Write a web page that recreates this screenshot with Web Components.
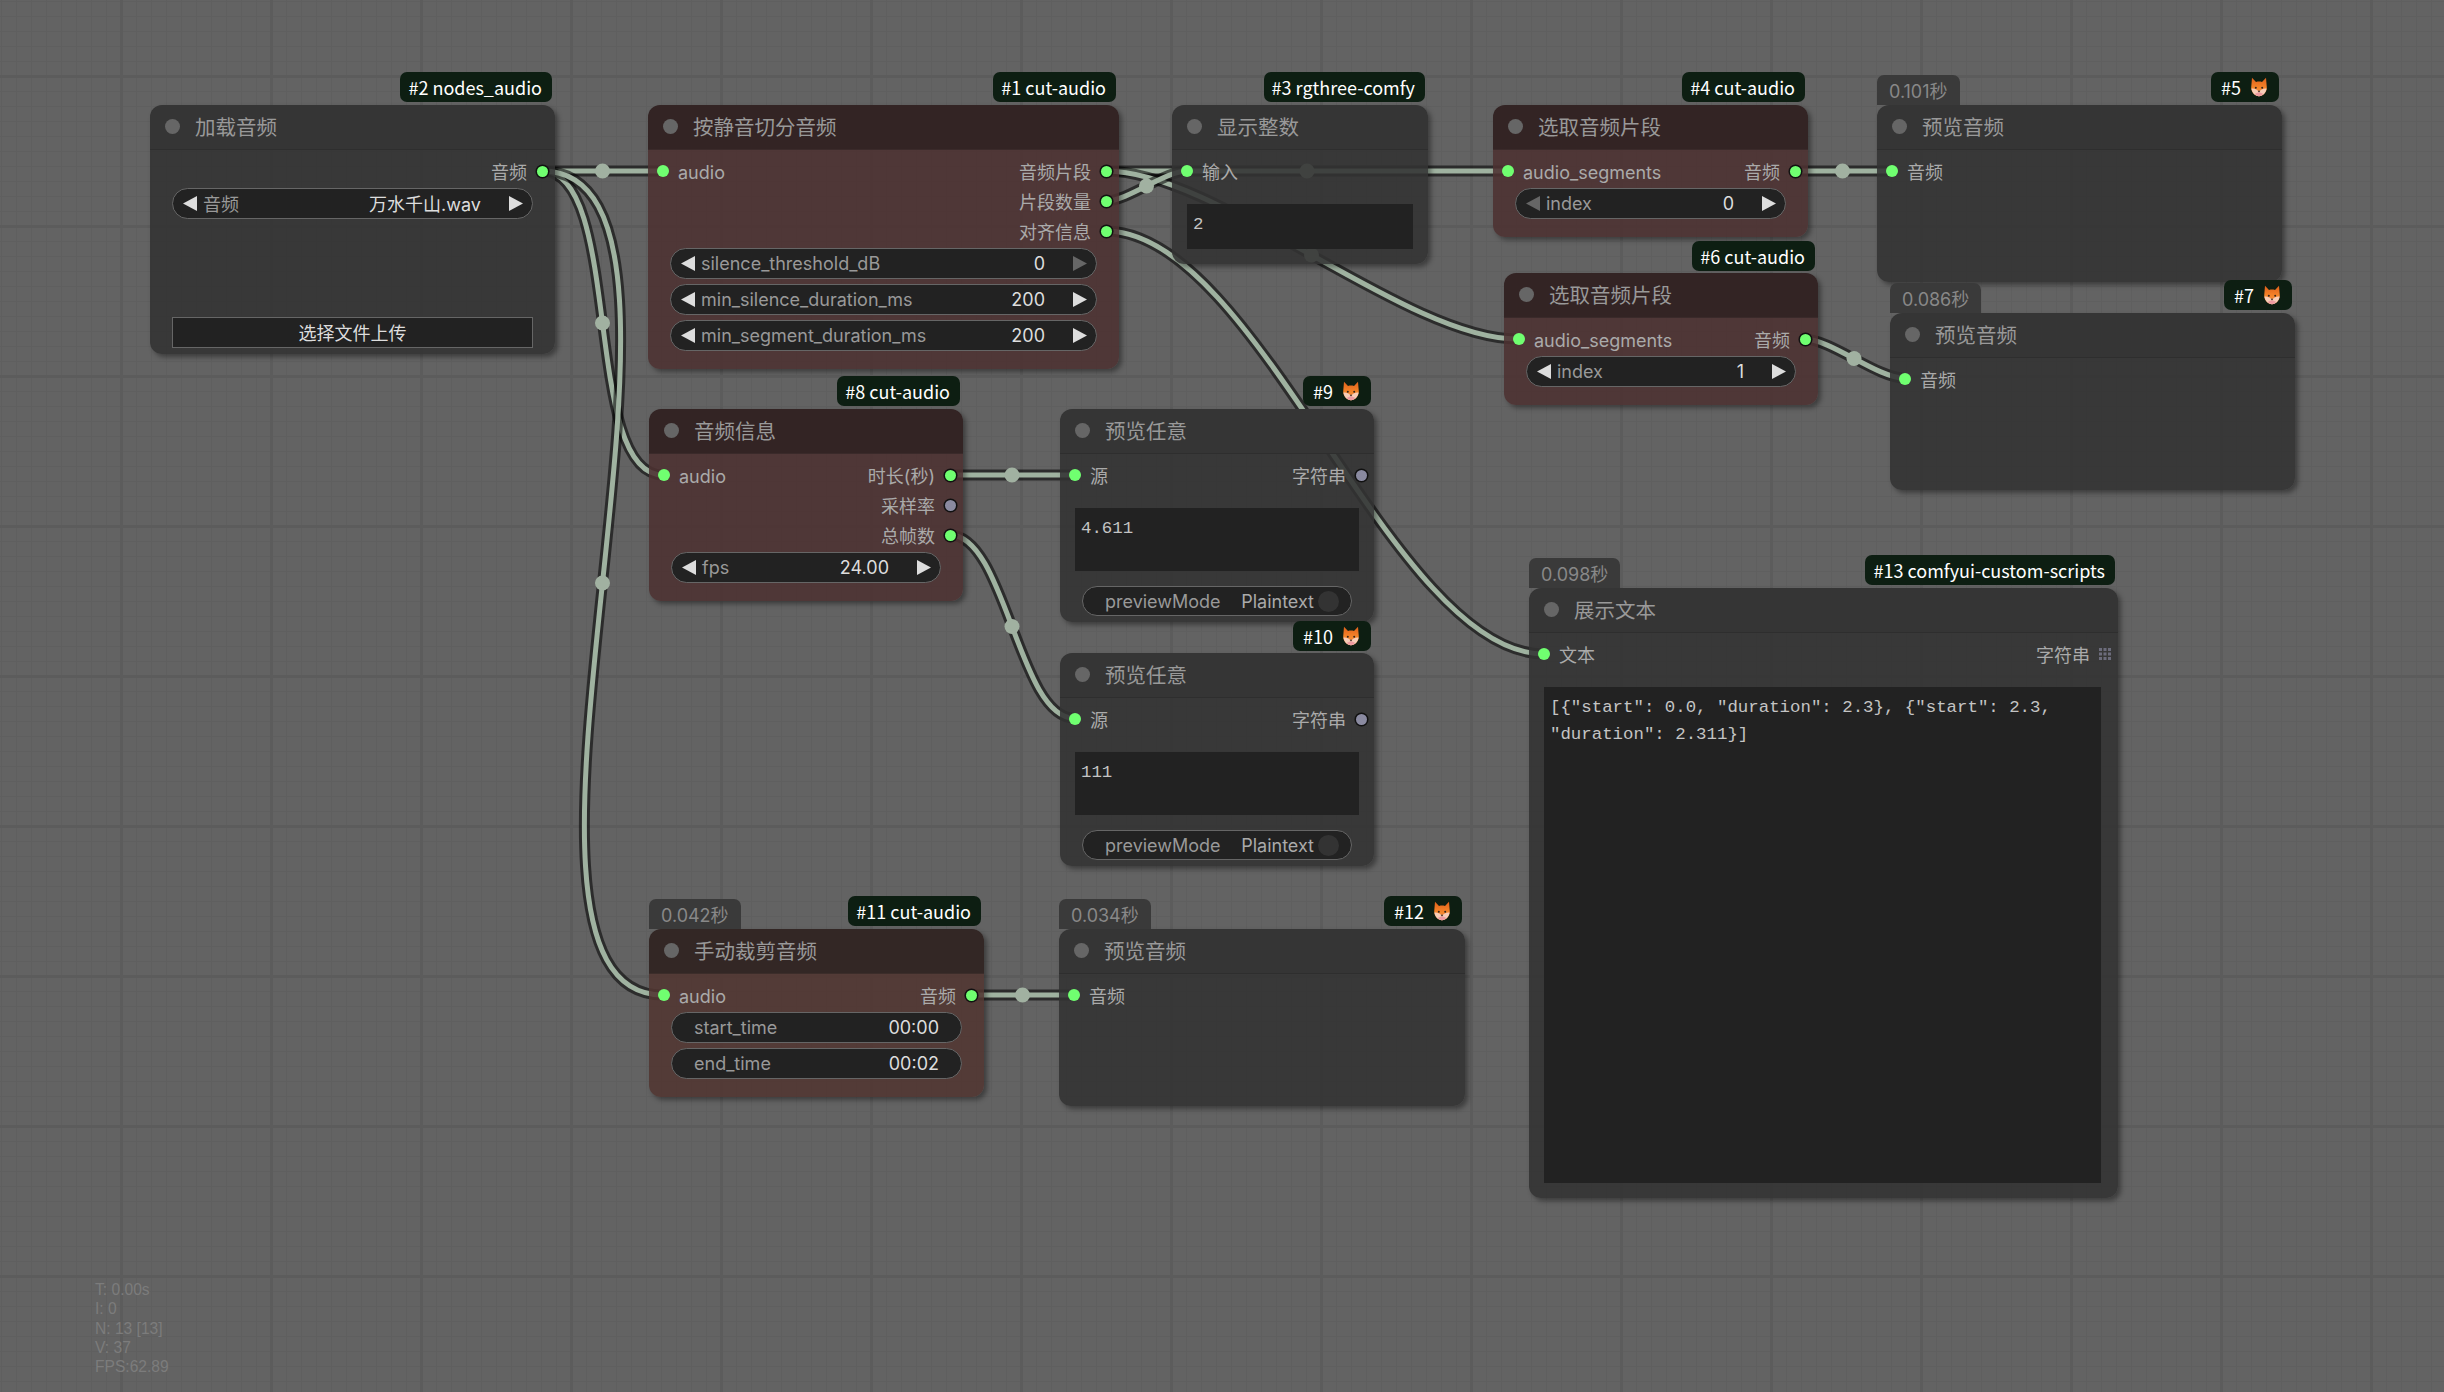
<!DOCTYPE html>
<html lang="zh">
<head>
<meta charset="utf-8">
<title>graph</title>
<style>
  html,body{margin:0;padding:0;width:2444px;height:1392px;overflow:hidden;background:#636363}
  body{font:18px Inter,"Noto Sans CJK SC",sans-serif}
</style>
</head>
<body>
<graph-canvas>
  <graph-links></graph-links>

  <graph-node x="150" y="105" w="405" h="249" name="加载音频" tag="#2 nodes_audio">
    <port-row out="音频"></port-row>
    <combo-widget label="音频" value="万水千山.wav"></combo-widget>
    <push-button>选择文件上传</push-button>
  </graph-node>

  <graph-node x="648" y="105" w="471" h="264" name="按静音切分音频" tag="#1 cut-audio" tone="red">
    <port-row in="audio" out="音频片段"></port-row>
    <port-row out="片段数量"></port-row>
    <port-row out="对齐信息"></port-row>
    <combo-widget label="silence_threshold_dB" value="0" noright></combo-widget>
    <combo-widget label="min_silence_duration_ms" value="200"></combo-widget>
    <combo-widget label="min_segment_duration_ms" value="200"></combo-widget>
  </graph-node>

  <graph-node x="1172" y="105" w="256" h="159" name="显示整数" tag="#3 rgthree-comfy">
    <port-row in="输入"></port-row>
    <text-box>2</text-box>
  </graph-node>

  <graph-node x="1493" y="105" w="315" h="132" name="选取音频片段" tag="#4 cut-audio" tone="red">
    <port-row in="audio_segments" out="音频"></port-row>
    <combo-widget label="index" value="0" noleft></combo-widget>
  </graph-node>

  <graph-node x="1877" y="105" w="405" h="177" name="预览音频" tag="#5" fox time="0.101秒">
    <port-row in="音频"></port-row>
  </graph-node>

  <graph-node x="1504" y="273" w="314" h="132" name="选取音频片段" tag="#6 cut-audio" tagtop="-32" tone="red">
    <port-row in="audio_segments" out="音频"></port-row>
    <combo-widget label="index" value="1"></combo-widget>
  </graph-node>

  <graph-node x="1890" y="313" w="405" h="177" name="预览音频" tag="#7" fox time="0.086秒">
    <port-row in="音频"></port-row>
  </graph-node>

  <graph-node x="649" y="409" w="314" h="192" name="音频信息" tag="#8 cut-audio" tone="red">
    <port-row in="audio" out="时长(秒)"></port-row>
    <port-row out="采样率" outstate="idle"></port-row>
    <port-row out="总帧数"></port-row>
    <combo-widget label="fps" value="24.00"></combo-widget>
  </graph-node>

  <graph-node x="1060" y="409" w="314" h="213" name="预览任意" tag="#9" fox>
    <port-row in="源" out="字符串" outstate="idle"></port-row>
    <text-box>4.611</text-box>
    <toggle-widget label="previewMode" value="Plaintext"></toggle-widget>
  </graph-node>

  <graph-node x="1060" y="653" w="314" h="213" name="预览任意" tag="#10" tagtop="-32" fox>
    <port-row in="源" out="字符串" outstate="idle"></port-row>
    <text-box>111</text-box>
    <toggle-widget label="previewMode" value="Plaintext"></toggle-widget>
  </graph-node>

  <graph-node x="649" y="929" w="335" h="168" name="手动裁剪音频" tag="#11 cut-audio" tone="brown" time="0.042秒">
    <port-row in="audio" out="音频"></port-row>
    <combo-widget label="start_time" value="00:00" plain></combo-widget>
    <combo-widget label="end_time" value="00:02" plain></combo-widget>
  </graph-node>

  <graph-node x="1059" y="929" w="406" h="177" name="预览音频" tag="#12" fox time="0.034秒">
    <port-row in="音频"></port-row>
  </graph-node>

  <graph-node x="1529" y="588" w="589" h="610" name="展示文本" tag="#13 comfyui-custom-scripts" time="0.098秒">
    <port-row in="文本" out="字符串" outstate="grid"></port-row>
    <text-box style="margin-right:17px">[{"start": 0.0, "duration": 2.3}, {"start": 2.3, "duration": 2.311}]</text-box>
  </graph-node>

  <graph-stats>
    <div>T: 0.00s</div>
    <div>I: 0</div>
    <div>N: 13 [13]</div>
    <div>V: 37</div>
    <div>FPS:62.89</div>
  </graph-stats>
</graph-canvas>

<script>
class GraphCanvas extends HTMLElement {
  constructor(){
    super();
    const s = this.attachShadow({mode:'open'});
    s.innerHTML = `
      <style>
        :host{display:block;position:relative;width:2444px;height:1392px;overflow:hidden;background:#636363}
        #grid{position:absolute;inset:0;width:100%;height:100%}
      </style>
      <svg id="grid" width="2444" height="1392">
        <defs>
          <pattern id="minor" width="15" height="15" patternUnits="userSpaceOnUse" x="1" y="1">
            <path d="M.5 0V15M0 .5H15" stroke="#5f5f5f" fill="none"/>
          </pattern>
          <pattern id="major" width="150" height="150" patternUnits="userSpaceOnUse" x="120" y="75">
            <path d="M1.5 0V150M0 1.5H150" stroke="#5c5c5c" stroke-width="3" fill="none"/>
          </pattern>
        </defs>
        <rect width="2444" height="1392" fill="#636363"/>
        <rect width="2444" height="1392" fill="url(#minor)"/>
        <rect width="2444" height="1392" fill="url(#major)"/>
      </svg>
      <slot></slot>`;
  }
}

// cable list: [x1,y1,x2,y2], from output dot to input dot
const LINKS = [
  [542,171,663,171],[542,171,663,475],[542,171,663,995],
  [1106,171,1508,171],[1106,171,1517,339],[1106,201,1187,171],
  [1106,231,1544,654],[1794,171,1891,171],[1804,339,1904,378],
  [950,475,1074,475],[950,535,1074,718],[971,995,1074,995]
];

class GraphLinks extends HTMLElement {
  constructor(){
    super();
    const s = this.attachShadow({mode:'open'});
    let out = '';
    for (const [ax,ay,bx,by] of LINKS){
      const d = Math.hypot(bx-ax,by-ay)*0.25;
      const p = `M${ax} ${ay}C${ax+d} ${ay} ${bx-d} ${by} ${bx} ${by}`;
      const mx = (ax+bx)/2, my = (ay+by)/2;
      out += `<path d="${p}" stroke="rgba(0,0,0,.55)" stroke-width="11" fill="none"/>`;
      out += `<path d="${p}" stroke="#9fb2a0" stroke-width="5" fill="none"/>`;
      out += `<circle cx="${mx}" cy="${my}" r="7.5" fill="#a1b1a1"/>`;
    }
    s.innerHTML = `
      <style>:host{display:block;position:absolute;inset:0}svg{display:block}</style>
      <svg width="2444" height="1392">${out}</svg>`;
  }
}

let foxCount = 0;
function foxIcon(){
  const id = 'fx' + (++foxCount);
  return `<svg class="fox" width="20" height="20" viewBox="0 0 20 20">
  <defs><linearGradient id="${id}" x1="0" y1="0" x2="0" y2="1">
    <stop offset="0" stop-color="#e0601a"/><stop offset=".55" stop-color="#f5852a"/><stop offset="1" stop-color="#f39a5a"/>
  </linearGradient></defs>
  <path d="M3 .8 7 5c2-.6 4-.6 6 0l4-4.200.8 9.700c0 4.500-3.500 8.700-7.800 8.700s-7.800-4.200-7.800-8.700z" fill="url(#${id})"/>
  <path d="M2.400 11.500c2.400-.5 5.200.6 7.600 2.800 2.400-2.200 5.200-3.300 7.600-2.800-.6 4.200-3.800 7.700-7.600 7.700s-7-3.500-7.600-7.700z" fill="#f8cdb8"/>
  <path d="M6 17c1.100-1 2.500-1.500 4-1.500s2.900.5 4 1.500c-1.100 1.400-2.500 2.200-4 2.200S7.100 18.400 6 17z" fill="#ee9aa0"/>
  <circle cx="6.800" cy="10.800" r="1" fill="#33231c"/><circle cx="13.200" cy="10.800" r="1" fill="#33231c"/>
  <path d="M8.700 13.800h2.600L10 15.400z" fill="#33231c"/>
</svg>`;
}

// head is opaque, the cables only show through the body
const TONES = {
  grey:{title:'#353535',body:'rgba(50,50,50,.88)',line:'#2e2e2e'},
  red:{title:'#332424',body:'rgba(76,49,49,.88)',line:'#3a2a2a'},
  brown:{title:'#332725',body:'rgba(81,53,49,.88)',line:'#3c2d2a'}
};

class GraphNode extends HTMLElement {
  constructor(){
    super();
    this.attachShadow({mode:'open'});
  }
  connectedCallback(){
    const a = n => this.getAttribute(n);
    const t = TONES[a('tone')||'grey'];
    const fox = a('fox')!==null;
    const time = a('time') ? `<div class="time">${a('time')}</div>` : '';
    this.shadowRoot.innerHTML = `
      <style>
        :host{display:block;position:absolute;left:${a('x')}px;top:${a('y')}px;width:${a('w')}px;height:${a('h')}px}
        .box{display:flex;flex-direction:column;height:100%;border-radius:12px;overflow:hidden;box-shadow:3px 3px 5px rgba(0,0,0,.38)}
        .head{flex:0 0 45px;box-sizing:border-box;display:flex;align-items:center;gap:15px;padding:0 0 2px 15px;background:${t.title};border-bottom:1px solid ${t.line};
          color:#999;font-size:20.500px}
        .head i{width:15px;height:15px;border-radius:50%;background:#666}
        .body{flex:1;display:flex;flex-direction:column;padding-top:6px;min-height:0;background:${t.body}}
        .tag{position:absolute;right:3px;top:${a('tagtop')||-33}px;height:30px;box-sizing:border-box;display:flex;align-items:center;gap:8px;padding:${fox?'0 10px':'0 10px 0 8px'};
          border-radius:7px;background:#0d1e12;color:#fff;font:18px "Noto Sans CJK SC",sans-serif;white-space:nowrap}
        .time{position:absolute;left:0;top:-30px;height:30px;box-sizing:border-box;display:flex;align-items:center;padding:0 12px;
          border-radius:7px 7px 0 0;background:#3a3a3a;color:#888;font-size:18px;white-space:nowrap}
      </style>
      ${time}
      <div class="tag">${a('tag')}${fox?foxIcon():''}</div>
      <div class="box">
        <div class="head"><i></i><span>${a('name')}</span></div>
        <div class="body"><slot></slot></div>
      </div>`;
  }
}

class PortRow extends HTMLElement {
  constructor(){
    super();
    this.attachShadow({mode:'open'});
  }
  connectedCallback(){
    const inp = this.getAttribute('in'), out = this.getAttribute('out');
    const st = this.getAttribute('outstate')||'on';
    const dot = st==='grid'
      ? `<svg class="g" width="12" height="12" viewBox="0 0 12 12"><path d="M0 1.500H12M0 6H12M0 10.500H12" stroke="#6c6c7c" stroke-width="3" stroke-dasharray="3 1.500" fill="none"/></svg>`
      : `<b class="o ${st}"></b>`;
    const latin = inp && /^[\x00-\x7f]+$/.test(inp);
    this.shadowRoot.innerHTML = `
      <style>
        :host{display:flex;flex:0 0 30px;align-items:center;box-sizing:border-box;padding:0 7px 0 9px;color:#aaa;font-size:18px;white-space:nowrap}
        b{display:block;width:12px;height:12px;box-sizing:border-box;border-radius:50%;background:#70ff70}
        b.o{box-shadow:0 0 0 1.500px #111;width:11px;height:11px;margin:0 .5px}
        b.idle{background:#8a8aa0}
        .in{display:flex;align-items:center;gap:9px}
        .out{display:flex;align-items:center;gap:9px;margin-left:auto}
        span.lat{position:relative;top:1px}
      </style>
      ${inp?`<div class="in"><b></b><span class="${latin?'lat':''}">${inp}</span></div>`:''}
      ${out?`<div class="out"><span>${out}</span>${dot}</div>`:''}`;
  }
}

class ComboWidget extends HTMLElement {
  constructor(){
    super();
    this.attachShadow({mode:'open'});
  }
  connectedCallback(){
    const g = n => this.getAttribute(n);
    const plain = g('plain')!==null;
    const up = s => /[^\x00-\x7f]/.test(s) ? ' up' : '';
    this.shadowRoot.innerHTML = `
      <style>
        :host{display:flex;flex:0 0 31px;align-items:center;box-sizing:border-box;margin:2px 22px 3px;padding:0 9px 0 10px;
          border:1.500px solid #666;border-radius:16px;background:#222;color:#999;font-size:18px;white-space:nowrap}
        :host([plain]){padding:0 22px}
        u{display:block;width:14px;height:15px;background:#ddd;flex:none}
        u.l{clip-path:polygon(100% 0,100% 100%,0 50%)}
        u.r{clip-path:polygon(0 0,0 100%,100% 50%)}
        u.off{background:#666}
        .k{margin-left:6px}
        .v{margin-left:auto;margin-right:28px;color:#ddd}
        .up{position:relative;top:-1px}
        :host([plain]) .k{margin-left:0}
        :host([plain]) .v{margin-right:0}
      </style>
      ${plain?'':`<u class="l${g('noleft')!==null?' off':''}"></u>`}
      <span class="k${up(g('label'))}">${g('label')}</span>
      <span class="v${up(g('value'))}">${g('value')}</span>
      ${plain?'':`<u class="r${g('noright')!==null?' off':''}"></u>`}`;
  }
}

class ToggleWidget extends HTMLElement {
  constructor(){
    super();
    this.attachShadow({mode:'open'});
  }
  connectedCallback(){
    this.shadowRoot.innerHTML = `
      <style>
        :host{display:flex;flex:0 0 30px;align-items:center;box-sizing:border-box;margin:0 22px 6px;padding:0 12px 0 22px;
          border:1.500px solid #666;border-radius:16px;background:#222;color:#999;font-size:18px;white-space:nowrap}
        .v{margin-left:auto;margin-right:4px;color:#aaa}
        i{display:block;width:21px;height:21px;border-radius:50%;background:#333}
      </style>
      <span>${this.getAttribute('label')}</span>
      <span class="v">${this.getAttribute('value')}</span>
      <i></i>`;
  }
}

class PushButton extends HTMLElement {
  constructor(){
    super();
    const s = this.attachShadow({mode:'open'});
    s.innerHTML = `
      <style>
        :host{display:flex;flex:0 0 31px;align-items:center;justify-content:center;box-sizing:border-box;margin:auto 22px 6px;padding-bottom:2px;
          border:1.500px solid #666;background:#222;color:#ddd;font-size:18px}
      </style>
      <slot></slot>`;
  }
}

class TextBox extends HTMLElement {
  constructor(){
    super();
    const s = this.attachShadow({mode:'open'});
    s.innerHTML = `
      <style>
        :host{display:block;flex:1;min-height:0;box-sizing:border-box;margin:18px 15px 15px;padding:7px 6px 0;background:#222;color:#c4c4c4;
          font:17.400px/27px "Liberation Mono","Noto Sans CJK SC",monospace;overflow-wrap:break-word}
      </style>
      <slot></slot>`;
  }
}

class GraphStats extends HTMLElement {
  constructor(){
    super();
    const s = this.attachShadow({mode:'open'});
    s.innerHTML = `
      <style>
        :host{display:block;position:absolute;left:95px;top:1280px;color:#7c7c7c;font:15.600px/19.300px "Liberation Sans",sans-serif}
      </style>
      <slot></slot>`;
  }
}

customElements.define('graph-canvas', GraphCanvas);
customElements.define('graph-links', GraphLinks);
customElements.define('graph-node', GraphNode);
customElements.define('port-row', PortRow);
customElements.define('combo-widget', ComboWidget);
customElements.define('toggle-widget', ToggleWidget);
customElements.define('push-button', PushButton);
customElements.define('text-box', TextBox);
customElements.define('graph-stats', GraphStats);
</script>
</body>
</html>
